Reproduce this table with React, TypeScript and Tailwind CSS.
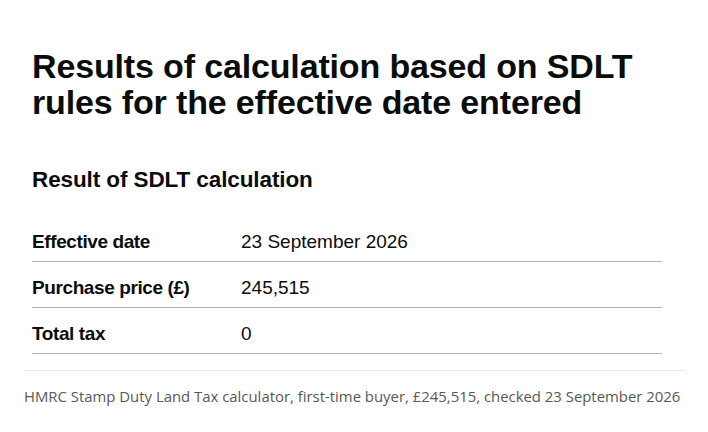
const rows = [
  { key: "Effective date", value: "23 September 2026" },
  { key: "Purchase price (£)", value: "245,515" },
  { key: "Total tax", value: "0" },
];

export default function App() {
  return (
    <div className="w-[708px] h-[432px] bg-white overflow-hidden text-[#0b0c0c]">
      <div className="pl-8 pt-[48px] font-['Liberation_Sans',Arial,sans-serif]">
        <h1 className="text-[34px] leading-[36px] font-bold tracking-[-0.15px]">
          Results of calculation based on SDLT
          <br />
          rules for the effective date entered
        </h1>
        <h2 className="mt-[45px] text-[22.5px] leading-[30px] font-bold tracking-[-0.1px]">
          Result of SDLT calculation
        </h2>
        <dl className="mt-[21px] w-[630px]">
          {rows.map((row) => (
            <div
              key={row.key}
              className="flex h-[46px] pt-[13px] border-b border-[#b1b4b6] text-[19px] leading-[25px]"
            >
              <dt className="w-[209px] font-bold tracking-[-0.4px]">{row.key}</dt>
              <dd>{row.value}</dd>
            </div>
          ))}
        </dl>
      </div>
      <div className="ml-6 w-[661px] mt-[16px] border-t border-[#e5e7eb] pt-[15px] whitespace-nowrap text-[14.9px] leading-[20px] text-[#585858] font-['Open_Sans',sans-serif]">
        HMRC Stamp Duty Land Tax calculator, first-time buyer, £245,515, checked 23 September 2026
      </div>
    </div>
  );
}
